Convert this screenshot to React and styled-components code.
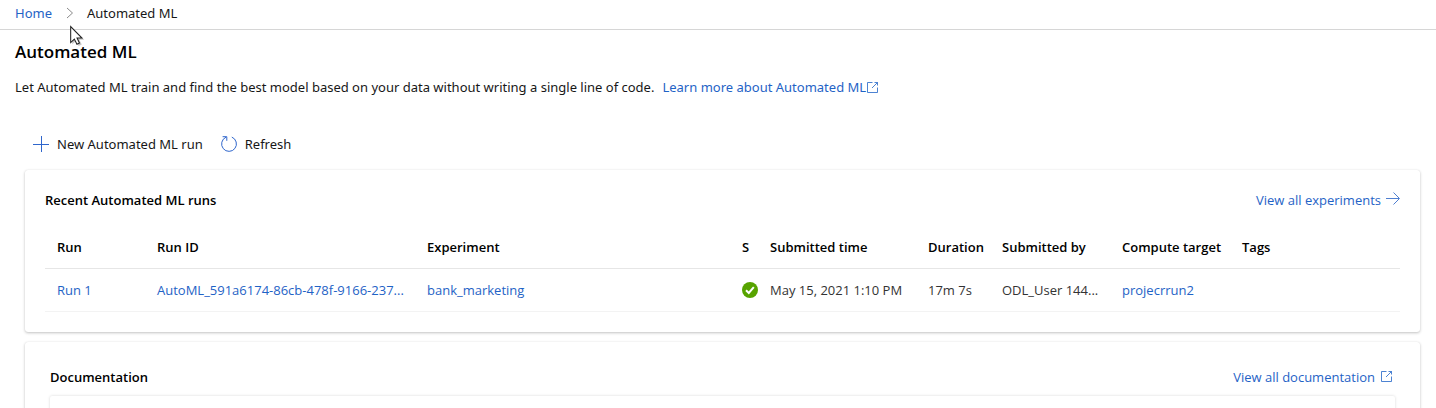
import React from "react";
import styled, { createGlobalStyle } from "styled-components";

const GlobalStyle = createGlobalStyle`
  * { box-sizing: border-box; }
  body {
    margin: 0;
    background: #fff;
    color: #171717;
    font-family: "Open Sans", "Noto Sans", sans-serif;
    font-size: 13px;
    line-height: 20px;
  }
`;

const Page = styled.div`
  display: flex;
  flex-direction: column;
  height: 100vh;
  overflow: hidden;
`;

const Breadcrumb = styled.nav`
  position: relative;
  display: flex;
  align-items: center;
  gap: 12px;
  flex: none;
  height: 30px;
  padding: 0 15px 3px;
  border-bottom: 1px solid #d6d6d6;
  font-family: "Noto Sans", sans-serif;
`;

const Link = styled.a`
  color: #1f63c6;
  text-decoration: none;
  white-space: nowrap;
`;

const IconLink = styled(Link)`
  display: inline-flex;
  align-items: center;
  gap: ${(p) => p.$gap || 0}px;
`;

const Pointer = styled.svg`
  position: absolute;
  left: 69px;
  top: 25px;
  z-index: 2;
`;

const Intro = styled.header`
  flex: none;
  padding: 10px 15px 0;
`;

const Title = styled.h1`
  margin: 0;
  font-size: 17px;
  line-height: 24px;
  font-weight: 600;
  color: #000;
`;

const Lead = styled.p`
  display: flex;
  gap: 8px;
  margin: 13px 0 0;
  font-family: "Noto Sans", sans-serif;
  white-space: nowrap;
`;

const Toolbar = styled.div`
  display: flex;
  flex: none;
  gap: 18px;
  padding: 37px 33px 16px;
  font-family: "Noto Sans", sans-serif;
`;

const ToolButton = styled.button`
  display: flex;
  align-items: center;
  gap: 8px;
  padding: 0;
  border: 0;
  background: none;
  color: inherit;
  font: inherit;
`;

const Cards = styled.main`
  display: flex;
  flex: 1;
  flex-direction: column;
  gap: 10px;
  min-height: 0;
  padding: 0 16px 0 25px;
`;

const Card = styled.section`
  flex: ${(p) => (p.$fill ? "1 0 auto" : "none")};
  padding: ${(p) => (p.$fill ? "25px 25px 0" : "20px")};
  border-radius: 3px;
  background: #fff;
  box-shadow: 0 1px 3px rgba(0, 0, 0, 0.24), 0 0 1px rgba(0, 0, 0, 0.1);
`;

const CardHeader = styled.div`
  display: flex;
  align-items: center;
  justify-content: space-between;
  padding-right: ${(p) => p.$inset || 0}px;
`;

const CardTitle = styled.h2`
  margin: 0;
  font-size: 13px;
  line-height: 20px;
  font-weight: 600;
  color: #000;
`;

const DocPanel = styled.div`
  height: 120px;
  margin-top: 9px;
  border-radius: 2px;
  box-shadow: 0 0 3px rgba(0, 0, 0, 0.16);
`;

const Table = styled.table`
  width: 100%;
  margin-top: 16px;
  border-collapse: collapse;
  table-layout: fixed;
`;

const Col = styled.col`
  width: ${(p) => (p.$w ? `${p.$w}px` : "auto")};
`;

const HeadCell = styled.th`
  height: 42px;
  padding: 0 0 0 12px;
  border-bottom: 1px solid #e6e6e6;
  color: #000;
  font-weight: 600;
  text-align: left;
  white-space: nowrap;
`;

const Cell = styled.td`
  height: 43px;
  padding: 0 0 0 12px;
  border-bottom: 1px solid #f3f3f3;
  color: #333;
  white-space: nowrap;
`;

const Status = styled.svg`
  display: block;
`;

const ExternalIcon = () => (
  <svg width="11" height="11" viewBox="0 0 11 11" fill="none" stroke="#1f63c6" aria-hidden="true">
    <path d="M5.500.5H.5v10h10V5.500M7.500.5h3v3M10.500.5l-5.500 5.500" strokeWidth=".8" />
  </svg>
);

const columns = [
  ["Run", 100],
  ["Run ID", 270],
  ["Experiment", 315],
  ["S", 28],
  ["Submitted time", 158],
  ["Duration", 74],
  ["Submitted by", 120],
  ["Compute target", 120],
  ["Tags", 0],
];

export default function App() {
  return (
    <Page>
      <GlobalStyle />
      <Breadcrumb aria-label="Breadcrumb">
        <Link href="#home">Home</Link>
        <svg width="11" height="12" viewBox="0 0 11 12" fill="none" stroke="#8a8a8a" aria-hidden="true">
          <path d="M3 1l5.500 5L3 11" />
        </svg>
        <span>Automated ML</span>
        <Pointer width="18" height="23" viewBox="0 0 17 22" aria-hidden="true">
          <path d="M3 3v15.500l3.500-3.300 2.600 5 3-1.500-2.300-4.700h4.700z" fill="#000" opacity=".22" />
          <path d="M1.500 1.500v15.300l3.500-3.400 2.500 5 2.400-1.200-2.300-4.700h4.700z" fill="#fff" stroke="#222" />
        </Pointer>
      </Breadcrumb>
      <Intro>
        <Title>Automated ML</Title>
        <Lead>
          <span>Let Automated ML train and find the best model based on your data without writing a single line of code.</span>
          <IconLink href="#learn" $gap={1}>Learn more about Automated ML<ExternalIcon /></IconLink>
        </Lead>
      </Intro>
      <Toolbar>
        <ToolButton type="button">
          <svg width="16" height="16" viewBox="0 0 16 16" fill="none" stroke="#2f66cc" aria-hidden="true">
            <path d="M8.500 0v16M0 8.500h16" />
          </svg>
          New Automated ML run
        </ToolButton>
        <ToolButton type="button">
          <svg width="16" height="16" viewBox="0 0 16 16" fill="none" stroke="#2f66cc" aria-hidden="true">
            <path d="M10.800 1.100A7.400 7.400 0 1 1 5 1.200M1.600.7h4.200v4.100" />
          </svg>
          Refresh
        </ToolButton>
      </Toolbar>
      <Cards>
        <Card>
          <CardHeader>
            <CardTitle>Recent Automated ML runs</CardTitle>
            <IconLink href="#experiments" $gap={5}>
              View all experiments
              <svg width="14" height="16" viewBox="0 0 14 16" fill="none" stroke="#4f7fd0" aria-hidden="true">
                <path d="M0 6.500h13M7.500.5l6 6-6 6" />
              </svg>
            </IconLink>
          </CardHeader>
          <Table>
            <colgroup>
              {columns.map(([name, w]) => <Col key={name} $w={w} />)}
            </colgroup>
            <thead>
              <tr>{columns.map(([name]) => <HeadCell key={name} scope="col">{name}</HeadCell>)}</tr>
            </thead>
            <tbody>
              <tr>
                <Cell><Link href="#run">Run 1</Link></Cell>
                <Cell><Link href="#run-id">AutoML_591a6174-86cb-478f-9166-237...</Link></Cell>
                <Cell><Link href="#experiment">bank_marketing</Link></Cell>
                <Cell>
                  <Status width="16" height="16" viewBox="0 0 16 16" role="img" aria-label="Completed">
                    <circle cx="8" cy="8" r="8" fill="#57a300" />
                    <path d="m4 8.200 2.800 2.800 5-5.800" fill="none" stroke="#fff" strokeWidth="2" />
                  </Status>
                </Cell>
                <Cell>May 15, 2021 1:10 PM</Cell>
                <Cell>17m 7s</Cell>
                <Cell>ODL_User 144...</Cell>
                <Cell><Link href="#compute">projecrrun2</Link></Cell>
                <Cell />
              </tr>
            </tbody>
          </Table>
        </Card>
        <Card $fill>
          <CardHeader $inset={3}>
            <CardTitle>Documentation</CardTitle>
            <IconLink href="#documentation" $gap={6}>View all documentation<ExternalIcon /></IconLink>
          </CardHeader>
          <DocPanel />
        </Card>
      </Cards>
    </Page>
  );
}
